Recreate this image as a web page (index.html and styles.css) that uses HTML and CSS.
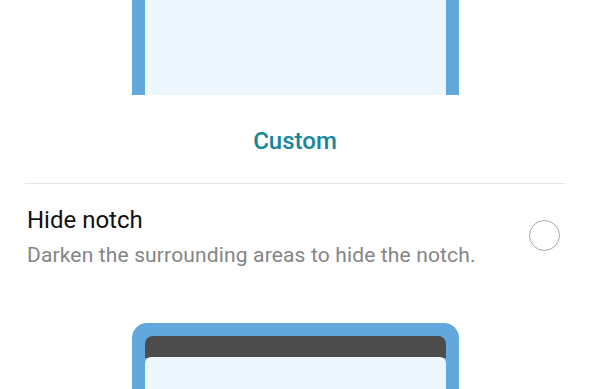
FILE: index.html
```html
<!DOCTYPE html>
<html lang="en">
<head>
    <meta charset="UTF-8">
    <meta name="viewport" content="width=device-width, initial-scale=1.0">
    <title>Notch</title>
    <link rel="stylesheet" href="styles.css">
</head>
<body>
    <main>
        <div class="phone phone-cut">
            <div class="screen"></div>
        </div>
        <div class="label">Custom</div>
        <div class="divider"></div>
        <div class="option">
            <div class="option-text">
                <div class="option-title">Hide notch</div>
                <div class="option-desc">Darken the surrounding areas to hide the notch.</div>
            </div>
            <div class="radio"></div>
        </div>
        <div class="phone phone-notch">
            <div class="notch-bar"></div>
            <div class="screen"></div>
        </div>
    </main>
</body>
</html>
```

FILE: styles.css
```css
body {
    margin: 0;
    background: #fff;
    font-family: Roboto, "Noto Sans", sans-serif;
    overflow: hidden;
}
main {
    width: 590px;
    height: 389px;
    overflow: hidden;
    display: flex;
    flex-direction: column;
    align-items: center;
}
main > * {
    flex-shrink: 0;
}
.phone {
    width: 301px;
    border: 13px solid #62a8dc;
    background: #62a8dc;
}
.phone-cut {
    height: 95px;
    border-top: 0;
    border-bottom: 0;
}
.phone-cut .screen {
    height: 100%;
    background: #eff7fe;
}
.label {
    margin-top: 28px;
    height: 36px;
    font-size: 24px;
    font-weight: 500;
    color: #16879a;
    line-height: 36px;
}
.divider {
    margin-top: 24px;
    width: 540px;
    height: 1px;
    background: #e6e6e6;
}
.option {
    width: 563px;
    margin-left: 27px;
    box-sizing: border-box;
    padding-right: 30px;
    display: flex;
    align-items: center;
    justify-content: space-between;
    margin-top: 22px;
}
.option-title {
    font-size: 24px;
    color: #111;
    line-height: 28px;
}
.option-desc {
    margin-top: 8px;
    font-size: 21px;
    letter-spacing: 0.15px;
    color: #858585;
    line-height: 26px;
}
.radio {
    width: 29px;
    height: 29px;
    margin-bottom: 4px;
    border: 1.5px solid #a8a8a8;
    border-radius: 50%;
}
.phone-notch {
    margin-top: 55px;
    height: 60px;
    border-bottom: 0;
    border-radius: 15px 15px 0 0;
}
.notch-bar {
    height: 22px;
    background: #4c4c4c;
    border-radius: 8px 8px 0 0;
}
.phone-notch .screen {
    height: 60px;
    margin-top: -1px;
    background: #eff7fe;
    border-radius: 6px 6px 0 0;
}
```
